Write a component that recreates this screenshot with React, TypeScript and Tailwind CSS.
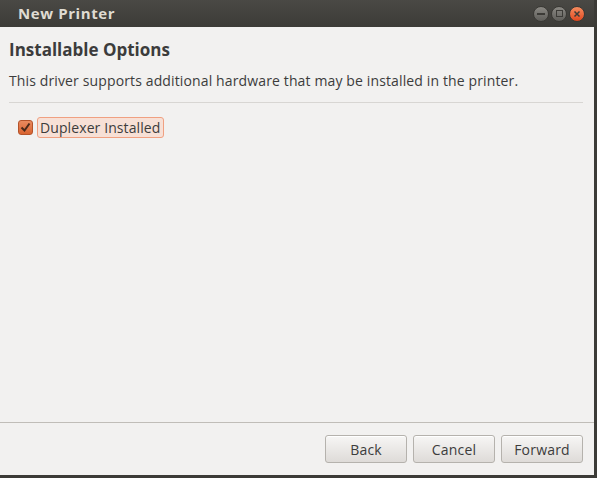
import React from "react";

export default function App() {
  const font = { fontFamily: '"Open Sans", "DejaVu Sans", sans-serif' };
  return (
    <div className="w-[597px] h-[478px] bg-[#3c3b37] overflow-hidden" style={font}>
      <div className="w-[594px] h-[475px] flex flex-col bg-[#f2f1f0]">
        {/* Title bar */}
        <div className="h-[27px] shrink-0 flex items-center justify-between bg-gradient-to-b from-[#4a4945] to-[#3c3b37] pl-[18px] pr-[9px]">
          <span className="text-[15px] font-bold text-[#dfdbd2] tracking-[0.6px]">New Printer</span>
          <div className="flex items-center gap-[2px]">
            <div className="w-[16px] h-[16px] rounded-full bg-gradient-to-b from-[#8a8883] to-[#5f5e5a] border border-[#3a3935] flex items-center justify-center">
              <div className="w-[8px] h-[2px] bg-[#3c3b37]" />
            </div>
            <div className="w-[16px] h-[16px] rounded-full bg-gradient-to-b from-[#8a8883] to-[#5f5e5a] border border-[#3a3935] flex items-center justify-center">
              <div className="w-[7px] h-[7px] border-[1.5px] border-[#3c3b37]" />
            </div>
            <div className="w-[16px] h-[16px] rounded-full bg-gradient-to-b from-[#f58b5e] to-[#e0461c] border border-[#3a3935] flex items-center justify-center">
              <svg width="8" height="8" viewBox="0 0 8 8">
                <path d="M1.5 1.5 L6.5 6.5 M6.5 1.5 L1.5 6.5" stroke="#3c3b37" strokeWidth="1.5" />
              </svg>
            </div>
          </div>
        </div>

        {/* Content */}
        <div className="flex-1 flex flex-col px-[9px]">
          <h1 className="text-[17px] font-bold text-[#3c3c3c] mt-[11px] leading-[24px] tracking-[0px]">Installable Options</h1>
          <p className="text-[14px] text-[#3c3c3c] mt-[9px] leading-[20px] tracking-[0.13px]">
            This driver supports additional hardware that may be installed in the printer.
          </p>
          <div className="h-px bg-[#d8d6d3] mt-[11px] mr-[2px]" />
          <div className="flex items-center mt-[14px] ml-[9px]">
            <div className="w-[15px] h-[15px] rounded-[3px] bg-gradient-to-b from-[#e98a5e] to-[#d9632f] border border-[#b4532a] flex items-center justify-center">
              <svg width="11" height="11" viewBox="0 0 11 11">
                <path d="M1.5 5.5 L4.5 8.5 L9.5 1.5" stroke="#4a2a1a" strokeWidth="2" fill="none" />
              </svg>
            </div>
            <div className="ml-[4px] h-[21px] px-[2px] flex items-center rounded-[3px] border border-[#f0a081] bg-[#f7e0d6] text-[14px] text-[#3c3c3c] tracking-[0.1px]">
              Duplexer Installed
            </div>
          </div>
        </div>

        {/* Footer */}
        <div className="h-[53px] shrink-0 border-t border-[#c0bdb8] flex items-start justify-end gap-[6px] pt-[12px] pr-[11px]">
          {["Back", "Cancel", "Forward"].map((l) => (
            <button
              key={l}
              className="w-[82px] h-[28px] rounded-[3px] border border-[#b5b2ad] bg-gradient-to-b from-[#f7f6f5] to-[#dedbd8] text-[14px] text-[#3c3c3c] tracking-[0.2px] shadow-[inset_0_1px_0_#ffffff]"
            >
              {l}
            </button>
          ))}
        </div>
      </div>
    </div>
  );
}
